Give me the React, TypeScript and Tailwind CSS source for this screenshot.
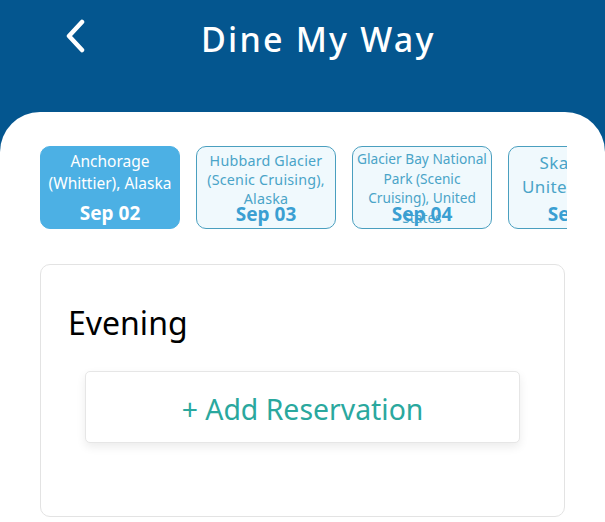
import React from 'react'

type Stop = {
  place: string
  date: string
  size: string
  selected?: boolean
}

const stops: Stop[] = [
  { place: 'Anchorage (Whittier), Alaska', date: 'Sep 02', size: 'text-[15.5px] leading-[21.5px] pt-[4px]', selected: true },
  { place: 'Hubbard Glacier (Scenic Cruising), Alaska', date: 'Sep 03', size: 'text-[14.3px] leading-[19px] pt-[4px] tracking-[0.2px]' },
  { place: 'Glacier Bay National Park (Scenic Cruising), United States', date: 'Sep 04', size: 'text-[13.7px] leading-[19.5px] pt-[2px]' },
  { place: 'Skagway, United States', date: 'Sep 05', size: 'text-[17px] leading-[24px] pt-[4px] px-[12px] tracking-[0.4px]' },
]

function StopCard({ stop }: { stop: Stop }) {
  return (
    <div
      className={
        stop.selected
          ? 'relative w-[140px] h-[83px] shrink-0 rounded-[10px] border border-[#4cb0e4] bg-[#4cb0e4] text-white overflow-hidden'
          : 'relative w-[140px] h-[83px] shrink-0 rounded-[10px] border border-[#4a9fbf] bg-[#f0f9fd] text-[#4aa4c8] overflow-hidden'
      }
    >
      <p className={`text-center ${stop.size}`}>{stop.place}</p>
      <p
        className={
          stop.selected
            ? 'absolute left-0 right-0 bottom-[4px] text-center text-[19px] leading-[22px] font-bold'
            : 'absolute left-0 right-0 bottom-[3px] text-center text-[19px] leading-[22px] font-bold text-[#3b9fd2]'
        }
      >
        {stop.date}
      </p>
    </div>
  )
}

export default function App() {
  return (
    <div className="w-[605px] h-[522px] overflow-hidden bg-[#04568f] font-['Noto_Sans',sans-serif]">
      {/* Header */}
      <div className="h-[112px]">
        <div className="flex items-center h-[78px] pl-[64px]">
          <svg width="22" height="34" viewBox="0 0 22 34" fill="none" className="-mt-[6px]">
            <path d="M18 3 L5 17 L18 31" stroke="white" strokeWidth="4.5" strokeLinecap="round" strokeLinejoin="round" />
          </svg>
          <h1 className="ml-[115px] text-white text-[34px] tracking-[2.2px] font-medium">Dine My Way</h1>
        </div>
      </div>

      {/* Panel */}
      <div className="bg-white rounded-t-[40px] h-[410px] pt-[34px]">
        <div className="ml-[40px] w-[527px] overflow-hidden flex gap-[16px]">
          {stops.map((s) => (
            <StopCard key={s.date} stop={s} />
          ))}
        </div>

        <div className="mx-[40px] mt-[35px] h-[253px] rounded-[10px] border border-[#e3e3e3]">
          <h2 className="pl-[27px] pt-[38px] text-[32px] leading-[40px] text-black">Evening</h2>
          <button className="mt-[28px] ml-[44px] w-[435px] h-[72px] rounded-[5px] border border-[#e6e6e6] bg-white shadow-[0_4px_10px_rgba(0,0,0,0.08)] text-[28.4px] leading-[40px] pt-[3px] text-[#2aa89e]">
            + Add Reservation
          </button>
        </div>
      </div>
    </div>
  )
}
